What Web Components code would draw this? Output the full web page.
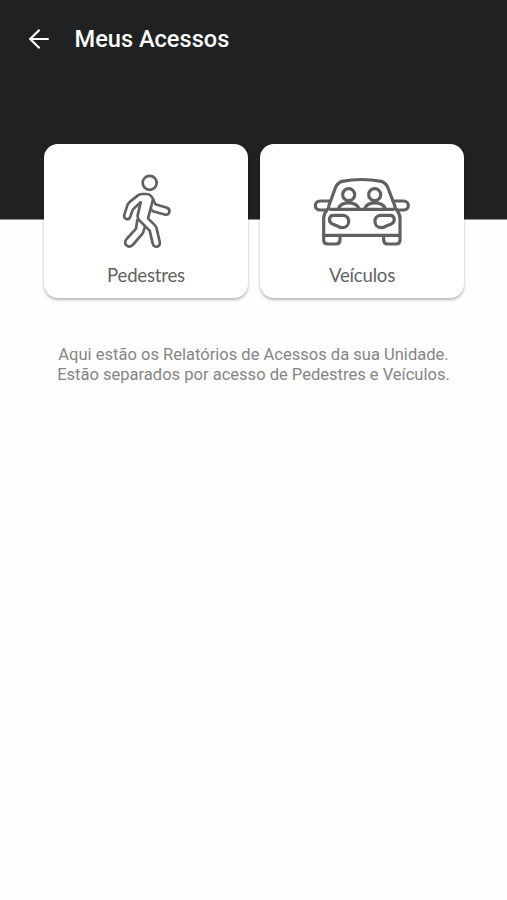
<!DOCTYPE html>
<html lang="pt-BR">
<head>
<meta charset="utf-8">
<title>Meus Acessos</title>
<style>html,body{margin:0;background:#fefefe}</style>
</head>
<body>
<access-page></access-page>
<script>
const define = (name, html) => customElements.define(name, class extends HTMLElement {
  constructor() {
    super();
    this.attachShadow({ mode: 'open' }).innerHTML = html;
  }
});

define('app-header', `
<style>
:host{display:block;box-sizing:border-box;height:220px;border-bottom:1px solid #8c8c8e;background:#202123;color:#fff;padding:24px 0 0 28px}
.bar{display:flex;align-items:center;height:30px;gap:24.500px}
svg{display:block;flex:none}
h1{margin:0;font:500 23.6px/30px Roboto,sans-serif;white-space:nowrap}
</style>
<div class="bar">
<svg width="22" height="22" viewBox="0 0 22 22" fill="none" stroke="#fff" stroke-width="2.2"><path d="M11.6 1.8 2.2 11l9.4 9.2M2.2 11H20.7"/></svg>
<h1><slot></slot></h1>
</div>`);

define('walker-icon', `
<style>:host{display:block;padding-left:2px}svg{display:block}</style>
<svg width="75" height="90" viewBox="0 0 225 270" fill="none" stroke="#606060" stroke-width="8" stroke-linecap="round" stroke-linejoin="round">
<circle cx="119" cy="53.500" r="21"/>
<path d="M92 112 74 128 68 135 60 157C55 168 39 161 43 149L52 121Q54 116 60 110L84 91Q89 87 97 87H110Q123 88 129 102L136 118 171 128C184 134 178 151 166 149L129 139Q125 137 122 130"/>
<path d="M129 102 124 123 114 160 133 179Q138 184 140 191L149 230C152 246 131 252 128 235L119 197 87 165Q82 159 83 151L92 112"/>
<path d="M82 165 78 191 50 222C38 236 54 252 68 240L95 209Q99 205 101 198L105 184"/>
</svg>`);

define('car-icon', `
<style>:host{display:block;padding-left:1px}svg{display:block}</style>
<svg width="115" height="90" viewBox="0 0 345 270" fill="none" stroke="#606060" stroke-width="9.500" stroke-linecap="round" stroke-linejoin="round">
<path d="M71 124 91 69Q97 54 111 49Q170 38 229 49Q243 54 249 69L270 124Q272 133 263 133H78Q69 133 71 124Z"/>
<path d="M72 108H46C26 108 26 135 46 135H65M269 108H295C315 108 315 135 295 135H276"/>
<path d="M68 132Q56 146 56 160V225Q56 237 68 237H93Q105 237 105 225V211M273 132Q285 146 285 160V225Q285 237 273 237H248Q236 237 236 225V211M56 211H285"/>
<circle cx="131" cy="89" r="18"/><circle cx="209" cy="89" r="18"/>
<path d="M100 131C108 108 153 108 162 131M179 131C187 108 232 108 241 131"/>
<path d="M86 151H114C138 151 136 188 113 188Q105 188 99 184L82 177C67 168 73 151 86 151ZM255 151H227C203 151 205 188 228 188Q236 188 242 184L259 177C274 168 268 151 255 151Z"/>
</svg>`);

define('access-card', `
<style>
:host{box-sizing:border-box;display:flex;flex-direction:column;align-items:center;height:154px;padding-top:21px;background:#fff;border-radius:14px;box-shadow:0 1.5px 3px rgba(0,0,0,.28)}
.label{font:400 18.600px/24px Lato,sans-serif;letter-spacing:-.2px;color:#626262;margin-top:8px}
</style>
<slot name="icon"></slot><span class="label"><slot></slot></span>`);

define('access-page', `
<style>
:host{display:block;min-height:900px;background:#fefefe}
.cards{display:grid;grid-template-columns:204px 204px;gap:12px;margin:-76px 0 0 44px}
p{margin:47px 0 0;text-align:center;font:400 16.550px/20px Roboto,sans-serif;color:#858585;white-space:nowrap}
</style>
<app-header>Meus Acessos</app-header>
<div class="cards">
<access-card><walker-icon slot="icon"></walker-icon>Pedestres</access-card>
<access-card><car-icon slot="icon"></car-icon>Veículos</access-card>
</div>
<p>Aqui estão os Relatórios de Acessos da sua Unidade.<br>Estão separados por acesso de Pedestres e Veículos.</p>`);
</script>
</body>
</html>
